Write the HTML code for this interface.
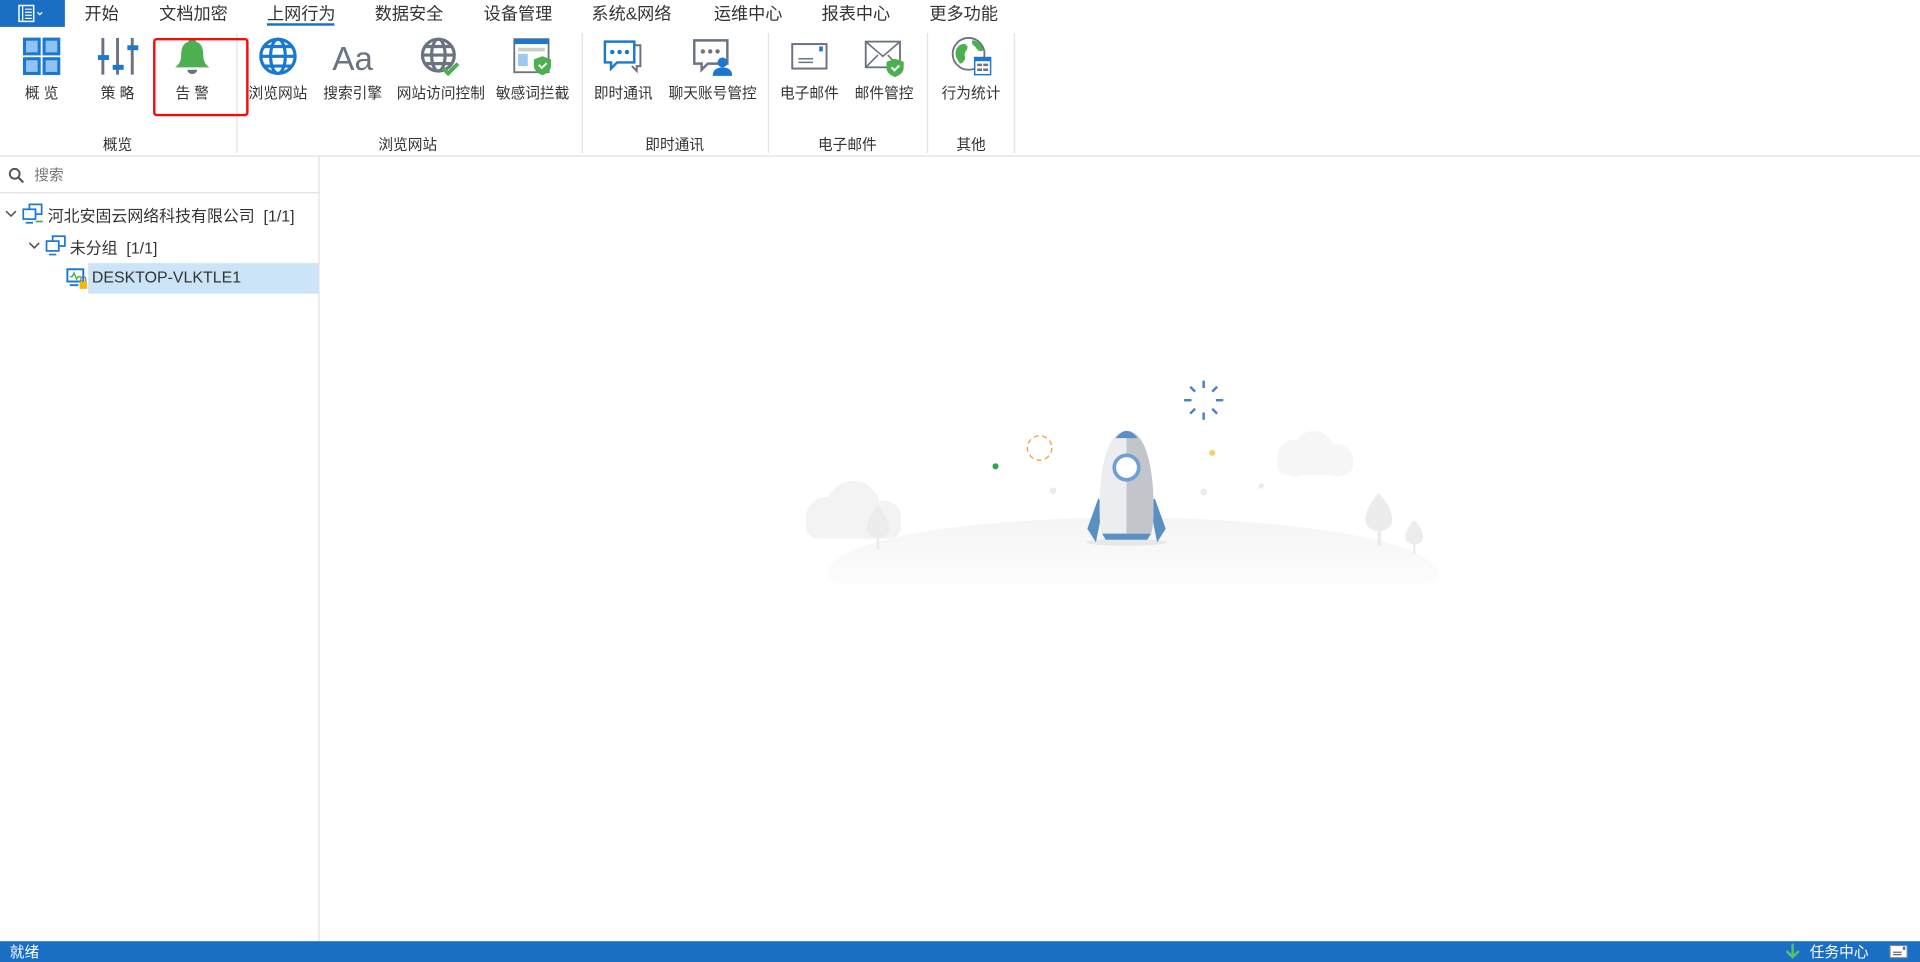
<!DOCTYPE html>
<html><head><meta charset="utf-8">
<style>
html,body{margin:0;padding:0;width:1920px;height:962px;overflow:hidden;background:#fff}
#w{position:absolute;left:0;top:0;width:1568px;height:786px;transform:scale(1.22449,1.22392);transform-origin:0 0;font-family:"Liberation Sans","Noto Sans CJK SC",sans-serif;color:#333}
.abs{position:absolute}
.menu{position:absolute;top:1px;font-size:14px;color:#333;white-space:nowrap}
.btn{position:absolute;top:29px;width:70px;margin-left:-35px;text-align:center;font-size:12px;color:#333}
.btn svg{display:block;margin:0 auto;width:34px;height:34px}
.btn span{display:block;margin-top:4px;white-space:nowrap}
.sep{position:absolute;top:27px;height:98px;width:1px;background:#e2e2e2}
.grp{position:absolute;top:109px;font-size:12px;color:#333;transform:translateX(-50%);white-space:nowrap}
.tree{position:absolute;font-size:13px;color:#333;white-space:nowrap}
</style></head><body><div id="w">
<div class="abs" style="left:0;top:0;width:53px;height:22px;background:#1a6fc4"></div>
<svg class="abs" style="left:14px;top:3px" width="26" height="16" viewBox="0 0 26 16"><rect x="1.5" y="1.5" width="12" height="13" fill="none" stroke="#fff" stroke-width="1.2"/><line x1="4.5" y1="2" x2="4.5" y2="14" stroke="#fff"/><line x1="6.5" y1="4.5" x2="12" y2="4.5" stroke="#fff"/><line x1="6.5" y1="7" x2="12" y2="7" stroke="#fff"/><line x1="6.5" y1="9.5" x2="12" y2="9.5" stroke="#fff"/><line x1="6.5" y1="12" x2="12" y2="12" stroke="#fff"/><path d="M16.5 7l2 2 2-2" fill="none" stroke="#fff"/></svg>
<div class="menu" style="left:69px">开始</div>
<div class="menu" style="left:130px">文档加密</div>
<div class="menu" style="left:218px">上网行为</div>
<div class="abs" style="left:218px;top:19px;width:55px;height:2px;background:#1a6fc4"></div>
<div class="menu" style="left:306px">数据安全</div>
<div class="menu" style="left:395px">设备管理</div>
<div class="menu" style="left:483px">系统&amp;网络</div>
<div class="menu" style="left:583px">运维中心</div>
<div class="menu" style="left:671px">报表中心</div>
<div class="menu" style="left:759px">更多功能</div>
<div class="abs" style="left:0;top:127px;width:1568px;height:1px;background:#e0e0e0"></div>
<div class="sep" style="left:193px"></div><div class="sep" style="left:475px"></div><div class="sep" style="left:627px"></div><div class="sep" style="left:757px"></div><div class="sep" style="left:828px"></div>

<div class="btn" style="left:34px"><svg viewBox="0 0 34 34"><g fill="#8fc3f2" stroke="#1a78d2" stroke-width="2.5"><rect x="3" y="3" width="12" height="12"/><rect x="19" y="3" width="12" height="12"/><rect x="3" y="19" width="12" height="12"/><rect x="19" y="19" width="12" height="12"/></g></svg><span>概 览</span></div>
<div class="btn" style="left:96px"><svg viewBox="0 0 34 34"><g stroke="#6b7280" stroke-width="2.4"><line x1="5" y1="2" x2="5" y2="32"/><line x1="17" y1="2" x2="17" y2="32"/><line x1="29" y1="2" x2="29" y2="32"/></g><g fill="#1a78d2"><rect x="1" y="16" width="9" height="4"/><rect x="13" y="24" width="9" height="4"/><rect x="25" y="8" width="9" height="4"/></g></svg><span>策 略</span></div>
<div class="btn" style="left:157px"><svg viewBox="0 0 34 34"><path d="M17 2c-2 0-3 1.5-3 3C9 6.5 8 11 8 16c0 5-2 8-5 10h28c-3-2-5-5-5-10 0-5-1-9.5-6-11 0-1.5-1-3-3-3z" fill="#4caf50"/><path d="M13 28a4 3.5 0 0 0 8 0z" fill="#6b7280"/></svg><span>告 警</span></div>
<div class="abs" style="left:125px;top:31px;width:74px;height:60px;border:2px solid #f20d0d;border-radius:3px"></div>

<div class="btn" style="left:227px"><svg viewBox="0 0 34 34"><g fill="none" stroke="#1a78d2" stroke-width="2.6"><circle cx="17" cy="17" r="14"/><ellipse cx="17" cy="17" rx="6" ry="14"/><line x1="3" y1="17" x2="31" y2="17"/><line x1="6" y1="9" x2="28" y2="9"/><line x1="6" y1="25" x2="28" y2="25"/></g></svg><span>浏览网站</span></div>
<div class="btn" style="left:288px"><svg viewBox="0 0 34 34"><text x="17" y="28" text-anchor="middle" font-family="Liberation Sans,sans-serif" font-size="27" fill="#6b7280">Aa</text></svg><span>搜索引擎</span></div>
<div class="btn" style="left:359px"><svg viewBox="0 0 34 34"><g fill="none" stroke="#6b7280" stroke-width="2.6"><circle cx="16" cy="16" r="13"/><ellipse cx="16" cy="16" rx="5.5" ry="13"/><line x1="3" y1="16" x2="29" y2="16"/><line x1="6" y1="9" x2="26" y2="9"/><line x1="6" y1="23" x2="26" y2="23"/></g><path d="M20 27l4 4 8-8" fill="none" stroke="#4caf50" stroke-width="3.2"/></svg><span>网站访问控制</span></div>
<div class="btn" style="left:435px"><svg viewBox="0 0 34 34"><rect x="2" y="3" width="28" height="27" fill="#fff" stroke="#6b7280" stroke-width="1.5"/><rect x="2" y="3" width="28" height="4" fill="#1a78d2"/><rect x="5" y="10" width="22" height="3" fill="#ccc"/><rect x="5" y="15" width="8" height="10" fill="#9cc9f0"/><path d="M25 17l7 2.5v5c0 4-3 6.5-7 8-4-1.5-7-4-7-8v-5z" fill="#4caf50"/><path d="M22 24l2.5 2.5 4-4" fill="none" stroke="#fff" stroke-width="1.6"/></svg><span>敏感词拦截</span></div>

<div class="btn" style="left:509px"><svg viewBox="0 0 34 34"><path d="M10 8h21v17h-3v4l-4-4" fill="none" stroke="#6b7280" stroke-width="1.6"/><path d="M2 5h24v17H12l-5 5v-5H2z" fill="#fff" stroke="#1a78d2" stroke-width="2"/><g fill="#1a78d2"><circle cx="8" cy="13.5" r="1.8"/><circle cx="14" cy="13.5" r="1.8"/><circle cx="20" cy="13.5" r="1.8"/></g></svg><span>即时通讯</span></div>
<div class="btn" style="left:581px"><svg viewBox="0 0 34 34"><path d="M3 4h27v19H14l-5 5v-5H3z" fill="#fff" stroke="#6b7280" stroke-width="2"/><g fill="#6b7280"><circle cx="10" cy="13" r="1.8"/><circle cx="16" cy="13" r="1.8"/><circle cx="22" cy="13" r="1.8"/></g><circle cx="26" cy="22" r="4" fill="#1a78d2"/><path d="M18 33c0-5 3.5-7 8-7s8 2 8 7z" fill="#1a78d2"/></svg><span>聊天账号管控</span></div>
<div class="btn" style="left:661px"><svg viewBox="0 0 34 34"><rect x="3" y="7" width="28" height="20" fill="#fff" stroke="#6b7280" stroke-width="1.6"/><rect x="25" y="9" width="3" height="4" fill="#1a78d2"/><line x1="8" y1="19" x2="20" y2="19" stroke="#6b7280" stroke-width="1.2"/><line x1="8" y1="22" x2="20" y2="22" stroke="#6b7280" stroke-width="1.2"/></svg><span>电子邮件</span></div>
<div class="btn" style="left:722px"><svg viewBox="0 0 34 34"><rect x="2" y="5" width="28" height="21" fill="#fff" stroke="#6b7280" stroke-width="1.5"/><path d="M2 5l14 12 14-12M2 26l10-10M30 26l-10-10" fill="none" stroke="#6b7280" stroke-width="1.3"/><path d="M26 19l7 2.5v5c0 3.5-3 6-7 7.5-4-1.5-7-4-7-7.5v-5z" fill="#4caf50"/><path d="M23 26l2.5 2.5 4-4" fill="none" stroke="#fff" stroke-width="1.6"/></svg><span>邮件管控</span></div>
<div class="btn" style="left:793px"><svg viewBox="0 0 34 34"><circle cx="15" cy="15" r="13" fill="#fff" stroke="#6b7280" stroke-width="1.5"/><path d="M5 11c3-5 8-5 9-2 1 3-3 4-2 8 1 3-2 6-4 6-2-3-5-7-3-12zM18 4c4 0 8 3 9 8-2 2-5 0-6-2-1-2-4-2-3-6z" fill="#4caf50"/><rect x="20" y="18" width="13" height="14" fill="#fff" stroke="#1a78d2" stroke-width="1.2"/><rect x="20" y="18" width="13" height="3" fill="#1a78d2"/><g fill="#6b7280"><rect x="22" y="23" width="4" height="2"/><rect x="27" y="23" width="4" height="2"/><rect x="22" y="27" width="4" height="2"/><rect x="27" y="27" width="4" height="2"/></g></svg><span>行为统计</span></div>

<div class="grp" style="left:96px">概览</div>
<div class="grp" style="left:333px">浏览网站</div>
<div class="grp" style="left:551px">即时通讯</div>
<div class="grp" style="left:692px">电子邮件</div>
<div class="grp" style="left:793px">其他</div>

<div class="abs" style="left:260px;top:128px;width:1px;height:641px;background:#e0e0e0"></div>
<div class="abs" style="left:0;top:157px;width:260px;height:1px;background:#e0e0e0"></div>
<svg class="abs" style="left:7px;top:137px" width="13" height="13" viewBox="0 0 13 13"><circle cx="5" cy="5" r="4" fill="none" stroke="#555" stroke-width="1.6"/><line x1="8" y1="8" x2="12" y2="12" stroke="#555" stroke-width="1.8"/></svg>
<div class="tree" style="left:28px;top:134px;font-size:12px;color:#777">搜索</div>

<svg class="abs" style="left:4px;top:171px" width="10" height="8"><path d="M1 1.5l4 4 4-4" fill="none" stroke="#555" stroke-width="1.3"/></svg>
<svg class="abs" style="left:18px;top:166px" width="18" height="18" viewBox="0 0 18 18"><rect x="6" y="1" width="10" height="8" fill="none" stroke="#1a78d2" stroke-width="1.4"/><rect x="1" y="5" width="10" height="8" fill="#fff" stroke="#1a78d2" stroke-width="1.4"/><line x1="3" y1="16" x2="9" y2="16" stroke="#1a78d2" stroke-width="1.4"/><line x1="11" y1="15" x2="17" y2="15" stroke="#4caf50" stroke-width="1.4"/></svg>
<div class="tree" style="left:39px;top:166px">河北安固云网络科技有限公司&nbsp; [1/1]</div>

<svg class="abs" style="left:23px;top:197px" width="10" height="8"><path d="M1 1.5l4 4 4-4" fill="none" stroke="#555" stroke-width="1.3"/></svg>
<svg class="abs" style="left:37px;top:192px" width="18" height="18" viewBox="0 0 18 18"><rect x="6" y="1" width="10" height="8" fill="none" stroke="#1a78d2" stroke-width="1.4"/><rect x="1" y="5" width="10" height="8" fill="#fff" stroke="#1a78d2" stroke-width="1.4"/><line x1="3" y1="16" x2="9" y2="16" stroke="#1a78d2" stroke-width="1.4"/></svg>
<div class="tree" style="left:57px;top:192px">未分组&nbsp; [1/1]</div>

<div class="abs" style="left:72px;top:215px;width:188px;height:25px;background:#cce4f7"></div>
<svg class="abs" style="left:54px;top:219px" width="18" height="18" viewBox="0 0 18 18"><rect x="1" y="1" width="13" height="10" fill="#fff" stroke="#1a78d2" stroke-width="1.6"/><path d="M3 7h2l1.5-3 2 5 1.5-2h2" fill="none" stroke="#4caf50" stroke-width="1.2"/><line x1="3" y1="14" x2="10" y2="14" stroke="#1a78d2" stroke-width="1.6"/><rect x="11" y="11" width="6" height="6" fill="#f5b800"/><path d="M12 11v-2a2 2 0 0 1 4 0v2" fill="none" stroke="#777" stroke-width="1"/></svg>
<div class="tree" style="left:75px;top:219px">DESKTOP-VLKTLE1</div>

<svg class="abs" style="left:0;top:0" width="1568" height="786" viewBox="0 0 1568 786">
<defs><linearGradient id="g" x1="0" y1="0" x2="0" y2="1"><stop offset="0" stop-color="#f4f4f4"/><stop offset="1" stop-color="#fdfdfd"/></linearGradient></defs>
<path d="M675 470c0-30 120-47 245-47s255 17 255 47c0 5-10 8-20 8H695c-12 0-20-3-20-8z" fill="url(#g)"/>
<g fill="#f3f3f3"><circle cx="675" cy="423" r="17"/><circle cx="697" cy="415" r="22"/><circle cx="722" cy="423" r="14"/><rect x="658" y="420" width="78" height="20" rx="10"/></g>
<g fill="#f6f6f6"><circle cx="1058" cy="374" r="15"/><circle cx="1073" cy="368" r="16"/><circle cx="1092" cy="376" r="13"/><rect x="1043" y="372" width="62" height="16" rx="8"/></g>
<g fill="#ececec"><path d="M717 413c-6 7-9 13-9 19 0 5 4 8 9 8s9-3 9-8c0-6-3-12-9-19z"/><rect x="716" y="436" width="2" height="13"/>
<path d="M1126 403c-7 7-11 15-11 22 0 5 5 9 11 9s11-4 11-9c0-7-4-15-11-22z"/><rect x="1125" y="430" width="3" height="16"/>
<path d="M1155 425c-5 5-7 10-7 14 0 4 3 6 7 6s7-2 7-6c0-4-2-9-7-14z"/><rect x="1154" y="441" width="2" height="12"/></g>
<ellipse cx="920" cy="443" rx="33" ry="3" fill="#e8e8e8"/>
<path d="M897 407l-9 25 7 11 6-30z" fill="#5a8fc2"/><path d="M943 407l9 25-7 11-6-30z" fill="#5a8fc2"/>
<path d="M920 352c-17 0-22 35-22 60 0 9 0 19 2 24h40c2-5 2-15 2-24 0-25-5-60-22-60z" fill="#ebedf0"/>
<path d="M920 352c17 0 22 35 22 60 0 9 0 19-2 24h-20z" fill="#c2c5c9"/>
<path d="M911 358c3-4 6-6 9-6s6 2 9 6z" fill="#5a8fc2"/>
<path d="M900 436h40l-3 5h-34z" fill="#5a8fc2"/>
<circle cx="920" cy="382" r="10" fill="#fff" stroke="#6f9fd3" stroke-width="3"/>
<circle cx="849" cy="366" r="10" fill="none" stroke="#f5a54a" stroke-width="1.2" stroke-dasharray="4 3"/>
<g stroke="#4a80c4" stroke-width="2"><line x1="983" y1="311" x2="983" y2="317"/><line x1="983" y1="337" x2="983" y2="343"/><line x1="967" y1="327" x2="973" y2="327"/><line x1="993" y1="327" x2="999" y2="327"/><line x1="972" y1="316" x2="976" y2="320"/><line x1="990" y1="334" x2="994" y2="338"/><line x1="994" y1="316" x2="990" y2="320"/><line x1="976" y1="334" x2="972" y2="338"/></g>
<circle cx="813" cy="381" r="2.5" fill="#2eaa4c"/><circle cx="990" cy="370" r="2.5" fill="#f5d16a"/>
<g fill="#ececec"><circle cx="860" cy="401" r="2.8"/><circle cx="983" cy="402" r="2.8"/><circle cx="1030" cy="397" r="2.3"/></g>
</svg>

<div class="abs" style="left:0;top:769px;width:1568px;height:17px;background:#1a6fc4"></div>
<div class="abs" style="left:8px;top:769px;font-size:12px;color:#fff">就绪</div>
<svg class="abs" style="left:1457px;top:770px" width="14" height="14" viewBox="0 0 14 14"><path d="M7 1v11M2 7l5 5 5-5" fill="none" stroke="#5cbf70" stroke-width="2"/></svg>
<div class="abs" style="left:1478px;top:769px;font-size:12px;color:#fff">任务中心</div>
<svg class="abs" style="left:1543px;top:772px" width="15" height="11" viewBox="0 0 15 11"><rect x="0.5" y="0.5" width="14" height="10" fill="#fff" stroke="#888"/><rect x="11" y="1.5" width="2" height="2.5" fill="#1a78d2"/><line x1="3" y1="6" x2="10" y2="6" stroke="#666"/><line x1="3" y1="8" x2="10" y2="8" stroke="#666"/></svg>
</div></body></html>
